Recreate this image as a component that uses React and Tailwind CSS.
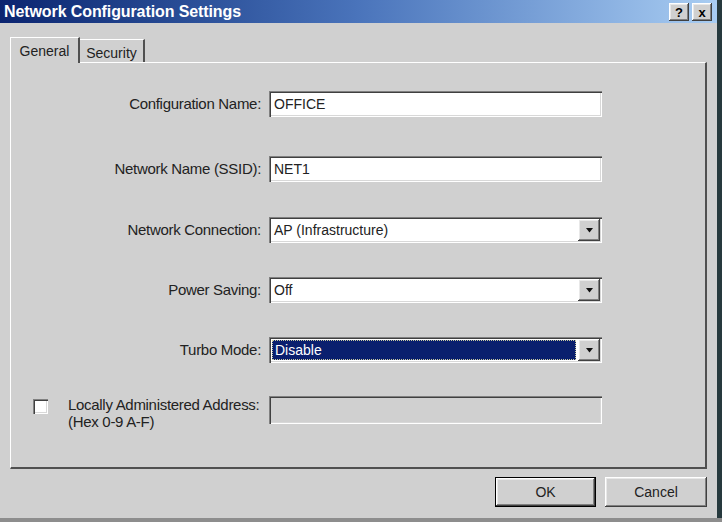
import React from 'react';

const raised = 'shadow-[inset_-1px_-1px_0_#404040,inset_1px_1px_0_#ffffff,inset_-2px_-2px_0_#808080,inset_2px_2px_0_#e8e8e8]';
const sunken = 'shadow-[inset_1px_1px_0_#808080,inset_2px_2px_0_#404040,inset_-1px_-1px_0_#ffffff,inset_-2px_-2px_0_#d8d8d8]';

const Arrow = () => (
  <svg width="9" height="5" viewBox="0 0 9 5">
    <path d="M1 0 H8 L4.5 4.5 Z" fill="#111" />
  </svg>
);

const TextField = ({ value, disabled }) => (
  <div
    className={`w-[333px] h-[26px] flex items-center pl-[5px] ${sunken} ${disabled ? 'bg-[#d0d0d0]' : 'bg-white'}`}
  >
    <span className="text-[14px] text-[#222]">{value}</span>
  </div>
);

const Select = ({ value, selected }) => (
  <div className={`w-[333px] h-[26px] flex items-stretch p-[2px] bg-white ${sunken}`}>
    {selected ? (
      <div className="flex-1 m-[1px] mr-[2px] bg-[#0a1f6e] border border-dotted border-[#c9c9a0] flex items-center pl-[2px]">
        <span className="text-[14px] text-white">{value}</span>
      </div>
    ) : (
      <div className="flex-1 flex items-center pl-[3px]">
        <span className="text-[14px] text-[#222]">{value}</span>
      </div>
    )}
    <div className={`w-[22px] bg-[#d0d0d0] flex items-center justify-center ${raised}`}>
      <Arrow />
    </div>
  </div>
);

const Row = ({ label, children, className }) => (
  <div className={`flex items-center ${className}`}>
    <div className="w-[251px] text-right text-[15px] text-[#222] tracking-[-0.3px] pr-[1px]">{label}</div>
    <div className="ml-[7px]">{children}</div>
  </div>
);

export default function App() {
  return (
    <div
      className="w-[722px] h-[522px] bg-[#26393d] flex flex-col"
      style={{ fontFamily: '"Liberation Sans", Arial, sans-serif' }}
    >
      <div className="w-[717px] h-[518px] bg-[#d0d0d0] flex flex-col">
        {/* title bar */}
        <div className="h-[23px] flex items-center justify-between pl-[4px] pr-[5px] bg-gradient-to-r from-[#0b2470] via-[#4a74bb] to-[#a9cdf2]">
          <span className="text-white font-bold text-[16px] tracking-[-0.1px]">Network Configuration Settings</span>
          <div className="flex gap-[3px] mt-[1px]">
            <div className={`w-[20px] h-[18px] bg-[#d0d0d0] flex items-center justify-center ${raised}`}>
              <span className="text-[13px] font-bold text-black leading-none">?</span>
            </div>
            <div className={`w-[20px] h-[18px] bg-[#d0d0d0] flex items-center justify-center ${raised}`}>
              <span className="text-[13px] font-bold text-black leading-none">x</span>
            </div>
          </div>
        </div>

        {/* tabs */}
        <div className="pl-[10px] pt-[14px] flex items-end h-[39px]">
          <div className="relative z-10 -mb-[1px] w-[70px] h-[26px] bg-[#d0d0d0] border-t border-l border-white border-r-2 border-r-[#505050] flex items-start justify-center pt-[3px]">
            <span className="text-[14px] text-[#222]">General</span>
          </div>
          <div className="w-[65px] h-[23px] bg-[#d0d0d0] border-t border-white border-r-2 border-r-[#505050] flex items-start justify-center pt-[3px]">
            <span className="text-[14px] text-[#222]">Security</span>
          </div>
        </div>

        {/* panel */}
        <div className="ml-[10px] w-[697px] h-[407px] border-t border-l border-white border-r-2 border-b-2 border-r-[#505050] border-b-[#505050] flex flex-col">
          <Row label="Configuration Name:" className="mt-[28px]">
            <TextField value="OFFICE" />
          </Row>
          <Row label="Network Name (SSID):" className="mt-[39px]">
            <TextField value="NET1" />
          </Row>
          <Row label="Network Connection:" className="mt-[35px]">
            <Select value="AP (Infrastructure)" />
          </Row>
          <Row label="Power Saving:" className="mt-[34px]">
            <Select value="Off" />
          </Row>
          <Row label="Turbo Mode:" className="mt-[34px]">
            <Select value="Disable" selected />
          </Row>
          <div className="flex items-start mt-[33px]">
            <div className="w-[251px] flex items-start pl-[22px]">
              <div className={`w-[15px] h-[15px] mt-[3px] shrink-0 bg-white ${sunken}`} />
              <div className="ml-[20px] text-[15px] leading-[17px] text-[#222] tracking-[-0.3px] whitespace-nowrap">
                <div>Locally Administered Address:</div>
                <div>(Hex 0-9 A-F)</div>
              </div>
            </div>
            <div className="ml-[7px]">
              <div className={`w-[333px] h-[28px] bg-[#d0d0d0] ${sunken}`} />
            </div>
          </div>
        </div>

        {/* buttons */}
        <div className="flex justify-end gap-[9px] pr-[10px] mt-[8px]">
          <div className={`w-[101px] h-[30px] bg-[#d0d0d0] border border-black flex items-center justify-center ${raised}`}>
            <span className="text-[14px] text-[#222]">OK</span>
          </div>
          <div className={`w-[102px] h-[30px] bg-[#d0d0d0] flex items-center justify-center ${raised}`}>
            <span className="text-[14px] text-[#222]">Cancel</span>
          </div>
        </div>
      </div>
      <div className="h-[4px] bg-[#8d8d8d]" />
    </div>
  );
}
